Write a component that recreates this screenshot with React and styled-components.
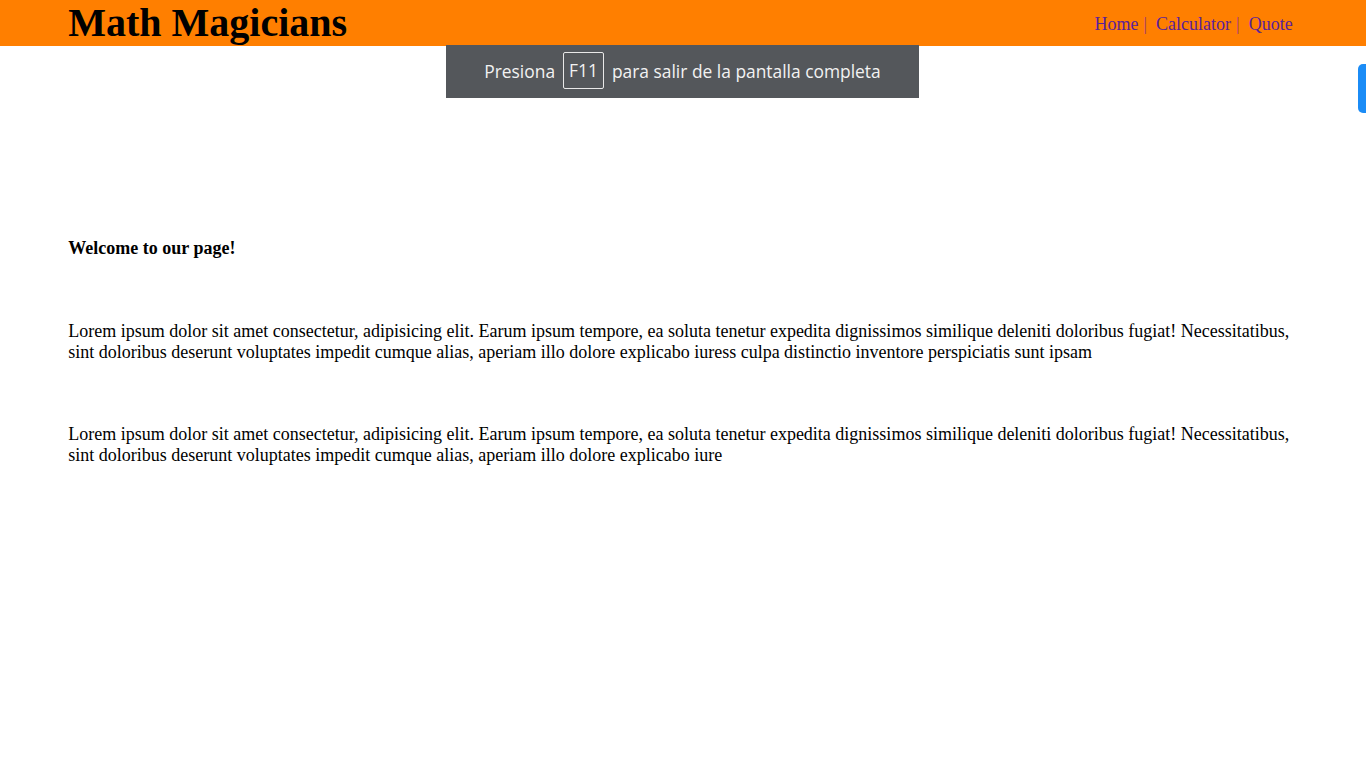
import React from "react";
import styled, { createGlobalStyle } from "styled-components";

const GlobalStyle = createGlobalStyle`
	body {
		margin: 0;
		font-family: "Liberation Serif", "Times New Roman", serif;
		background: #fff;
	}
`;

const links = ["Home", "Calculator", "Quote"];

const App = () => {
	return (
		<>
			<GlobalStyle />
			<Header>
				<HeaderInner>
					<Title>Math Magicians</Title>
					<Nav>
						{links.map((link, i) => (
							<NavItem key={link}>
								<NavLink href='#'>{link}</NavLink>
								{i < links.length - 1 && <Pipe>|</Pipe>}
							</NavItem>
						))}
					</Nav>
				</HeaderInner>
			</Header>
			<Main>
				<Welcome>Welcome to our page!</Welcome>
				<Paragraph>
					Lorem ipsum dolor sit amet consectetur, adipisicing elit. Earum ipsum tempore, ea soluta tenetur
					expedita dignissimos similique deleniti doloribus fugiat! Necessitatibus, sint doloribus deserunt
					voluptates impedit cumque alias, aperiam illo dolore explicabo iuress culpa distinctio inventore
					perspiciatis sunt ipsam
				</Paragraph>
				<Paragraph $gap={61}>
					Lorem ipsum dolor sit amet consectetur, adipisicing elit. Earum ipsum tempore, ea soluta tenetur
					expedita dignissimos similique deleniti doloribus fugiat! Necessitatibus, sint doloribus deserunt
					voluptates impedit cumque alias, aperiam illo dolore explicabo iure
				</Paragraph>
			</Main>
			<FullscreenNotice>
				Presiona <Key>F11</Key> para salir de la pantalla completa
			</FullscreenNotice>
			<SideTab />
		</>
	);
};

const Header = styled.header`
	background: #ff7f00;
	height: 46px;
`;
const HeaderInner = styled.div`
	width: 90%;
	height: 100%;
	margin: 0 auto;
	display: flex;
	align-items: center;
	justify-content: space-between;
`;
const Title = styled.h1`
	margin: 0;
	font-size: 40px;
	font-weight: 700;
	line-height: 46px;
	color: #000;
`;
const Nav = styled.nav`
	display: flex;
	align-items: center;
	margin-right: 5px;
	padding-top: 2px;
	font-size: 18px;
`;
const NavItem = styled.span`
	display: flex;
	align-items: center;
`;
const NavLink = styled.a`
	color: #5a1f99;
	text-decoration: none;
`;
const Pipe = styled.span`
	color: #9b3a7a;
	margin: 0 9px 0 5px;
`;
const Main = styled.main`
	width: 90%;
	margin: 0 auto;
	padding-top: 192px;
`;
const Welcome = styled.h3`
	margin: 0;
	font-size: 18px;
	line-height: 21px;
	font-weight: 700;
`;
const Paragraph = styled.p`
	margin: ${(p) => p.$gap ?? 62}px 0 0;
	font-size: 18px;
	line-height: 21px;
	color: #000;
`;
const FullscreenNotice = styled.div`
	position: absolute;
	top: 45px;
	left: 446px;
	width: 473px;
	height: 53px;
	padding-bottom: 2px;
	box-sizing: border-box;
	background: #54575b;
	color: #f2f2f2;
	font-family: "Open Sans", "Noto Sans", sans-serif;
	font-size: 17.4px;
	display: flex;
	align-items: center;
	justify-content: center;
	gap: 8px;
`;
const Key = styled.span`
	border: 1px solid #e8e8e8;
	border-radius: 2px;
	padding: 6px 5px;
	line-height: 23px;
`;
const SideTab = styled.div`
	position: absolute;
	top: 64px;
	right: 0;
	width: 8px;
	height: 49px;
	background: #1b8cf6;
	border-radius: 5px 0 0 5px;
`;

export default App;
